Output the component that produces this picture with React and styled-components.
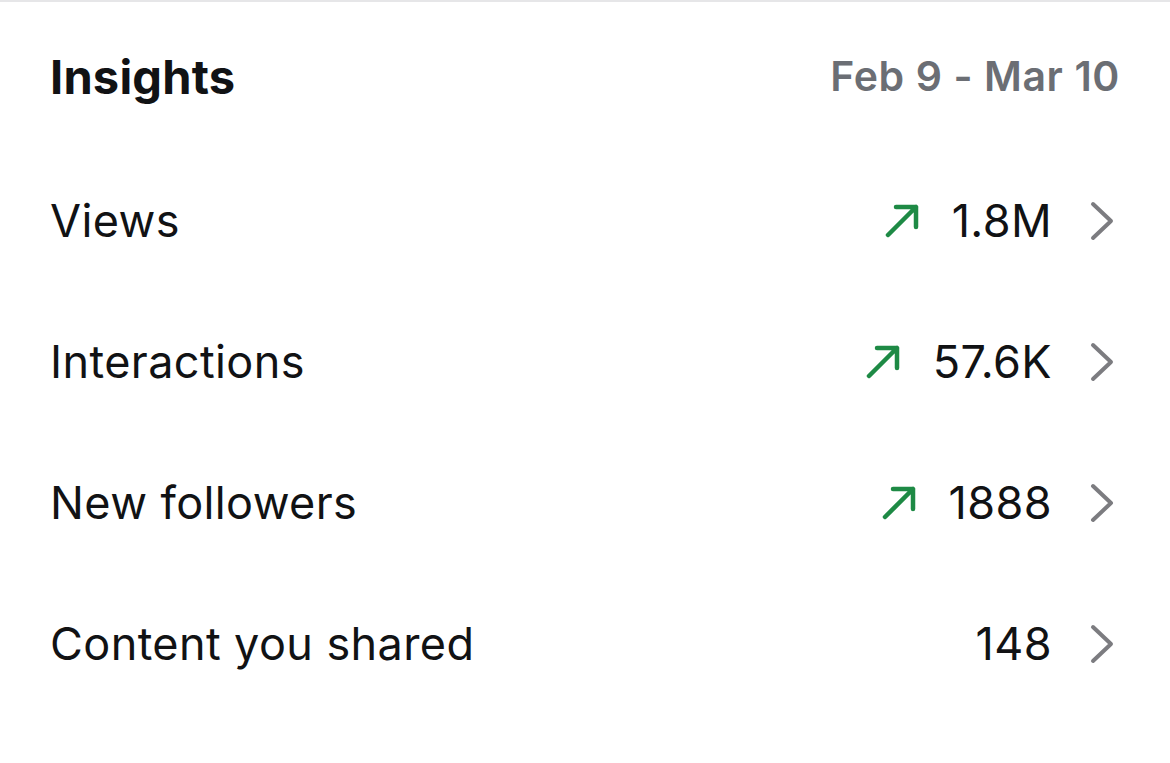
import styled, { createGlobalStyle } from "styled-components";

const GlobalStyle = createGlobalStyle`
  html, body {
    margin: 0;
    padding: 0;
    background: #fff;
  }
  body {
    font-family: Inter, "Noto Sans", "Liberation Sans", sans-serif;
    color: #111214;
  }
`;

const Page = styled.div`
  width: 1170px;
  height: 763px;
  border-top: 2px solid #e6e6e8;
  box-sizing: border-box;
  background: #fff;
`;

const Header = styled.div`
  height: 148px;
  display: flex;
  align-items: center;
  justify-content: space-between;
  padding: 0 50px 0 50px;
`;

const Title = styled.h1`
  margin: 0;
  font-size: 47px;
  font-weight: 700;
  letter-spacing: 0.2px;
  color: #111214;
`;

const DateRange = styled.span`
  font-size: 41px;
  font-weight: 600;
  letter-spacing: 0.6px;
  color: #6b6e74;
`;

const List = styled.div`
  display: flex;
  flex-direction: column;
`;

const Row = styled.div`
  height: 141px;
  display: flex;
  align-items: center;
  justify-content: space-between;
  padding: 0 56px 0 50px;
`;

const Label = styled.span`
  font-size: 45px;
  font-weight: 400;
  letter-spacing: 0.4px;
  color: #111214;
`;

const Right = styled.div`
  display: flex;
  align-items: center;
`;

const Trend = styled.svg`
  width: 34px;
  height: 34px;
  margin-right: 33px;
  color: #1e8a45;
`;

const Value = styled.span`
  font-size: 45px;
  font-weight: 400;
  letter-spacing: 0.4px;
  color: #111214;
`;

const Chevron = styled.svg`
  width: 24px;
  height: 40px;
  margin-left: 38px;
  color: #7c7c80;
`;

const ArrowUpRight = () => (
  <Trend viewBox="0 0 34 34" fill="none">
    <path
      d="M3 31 L31 3 M11 3 H31 V23"
      stroke="currentColor"
      strokeWidth="4.5"
      strokeLinecap="round"
      strokeLinejoin="round"
    />
  </Trend>
);

const ChevronRight = () => (
  <Chevron viewBox="0 0 24 40" fill="none">
    <path
      d="M3 3 L21 20 L3 37"
      stroke="currentColor"
      strokeWidth="4"
      strokeLinecap="round"
      strokeLinejoin="round"
    />
  </Chevron>
);

const rows = [
  { label: "Views", value: "1.8M", up: true },
  { label: "Interactions", value: "57.6K", up: true },
  { label: "New followers", value: "1888", up: true },
  { label: "Content you shared", value: "148", up: false },
];

export default function App() {
  return (
    <>
      <GlobalStyle />
      <Page>
        <Header>
          <Title>Insights</Title>
          <DateRange>Feb 9 - Mar 10</DateRange>
        </Header>
        <List>
          {rows.map((r) => (
            <Row key={r.label}>
              <Label>{r.label}</Label>
              <Right>
                {r.up && <ArrowUpRight />}
                <Value>{r.value}</Value>
                <ChevronRight />
              </Right>
            </Row>
          ))}
        </List>
      </Page>
    </>
  );
}
